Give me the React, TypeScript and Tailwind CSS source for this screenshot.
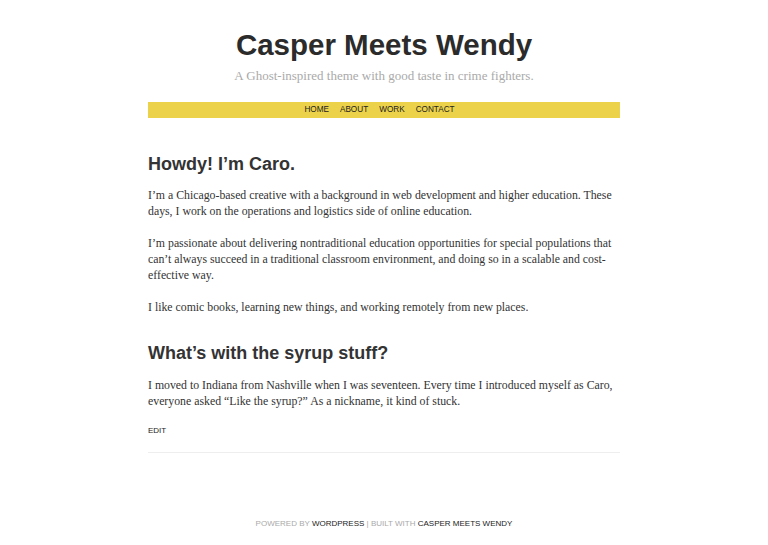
export default function App() {
  const sans = { fontFamily: '"Liberation Sans", Arial, sans-serif' };
  const serif = { fontFamily: '"Liberation Serif", Georgia, serif' };
  return (
    <div className="min-h-[545px] bg-white text-[#333]">
      <div className="mx-auto w-[472px] pt-[28px]">
        <header className="text-center">
          <h1 className="text-[29.5px] leading-[34px] font-bold text-[#2b2b2b]" style={sans}>Casper Meets Wendy</h1>
          <p className="mt-[5px] text-[13px] leading-[18px] text-[#aaa]" style={serif}>A Ghost-inspired theme with good taste in crime fighters.</p>
        </header>
        <nav className="mt-[17px] h-[16px] bg-[#ecd24a] flex justify-center items-center gap-[11px] pr-[9px] text-[8.2px] text-[#222]" style={sans}>
          <span>HOME</span>
          <span>ABOUT</span>
          <span>WORK</span>
          <span>CONTACT</span>
        </nav>
        <main className="pt-[34px]">
          <h2 className="text-[18px] leading-[24px] font-bold text-[#333]" style={sans}>Howdy! I’m Caro.</h2>
          <div className="mt-[11px] text-[11.8px] leading-[16px] text-[#333]" style={serif}>
            <p>I’m a Chicago-based creative with a background in web development and higher education. These days, I work on the operations and logistics side of online education.</p>
            <p className="mt-[16px]">I’m passionate about delivering nontraditional education opportunities for special populations that can’t always succeed in a traditional classroom environment, and doing so in a scalable and cost-effective way.</p>
            <p className="mt-[16px]">I like comic books, learning new things, and working remotely from new places.</p>
          </div>
          <h2 className="mt-[26px] text-[18px] leading-[24px] font-bold text-[#333]" style={sans}>What’s with the syrup stuff?</h2>
          <div className="mt-[12px] text-[11.8px] leading-[16px] text-[#333]" style={serif}>
            <p>I moved to Indiana from Nashville when I was seventeen. Every time I introduced myself as Caro, everyone asked “Like the syrup?” As a nickname, it kind of stuck.</p>
          </div>
          <div className="mt-[17px] text-[8px] leading-[10px] text-[#222]" style={sans}>EDIT</div>
          <div className="mt-[16px] border-t border-[#eee]"></div>
        </main>
        <footer className="mt-[66px] text-center text-[8px] leading-[10px] text-[#aaa]" style={sans}>
          POWERED BY <span className="text-[#222]">WORDPRESS</span> | BUILT WITH <span className="text-[#222]">CASPER MEETS WENDY</span>
        </footer>
      </div>
    </div>
  );
}
